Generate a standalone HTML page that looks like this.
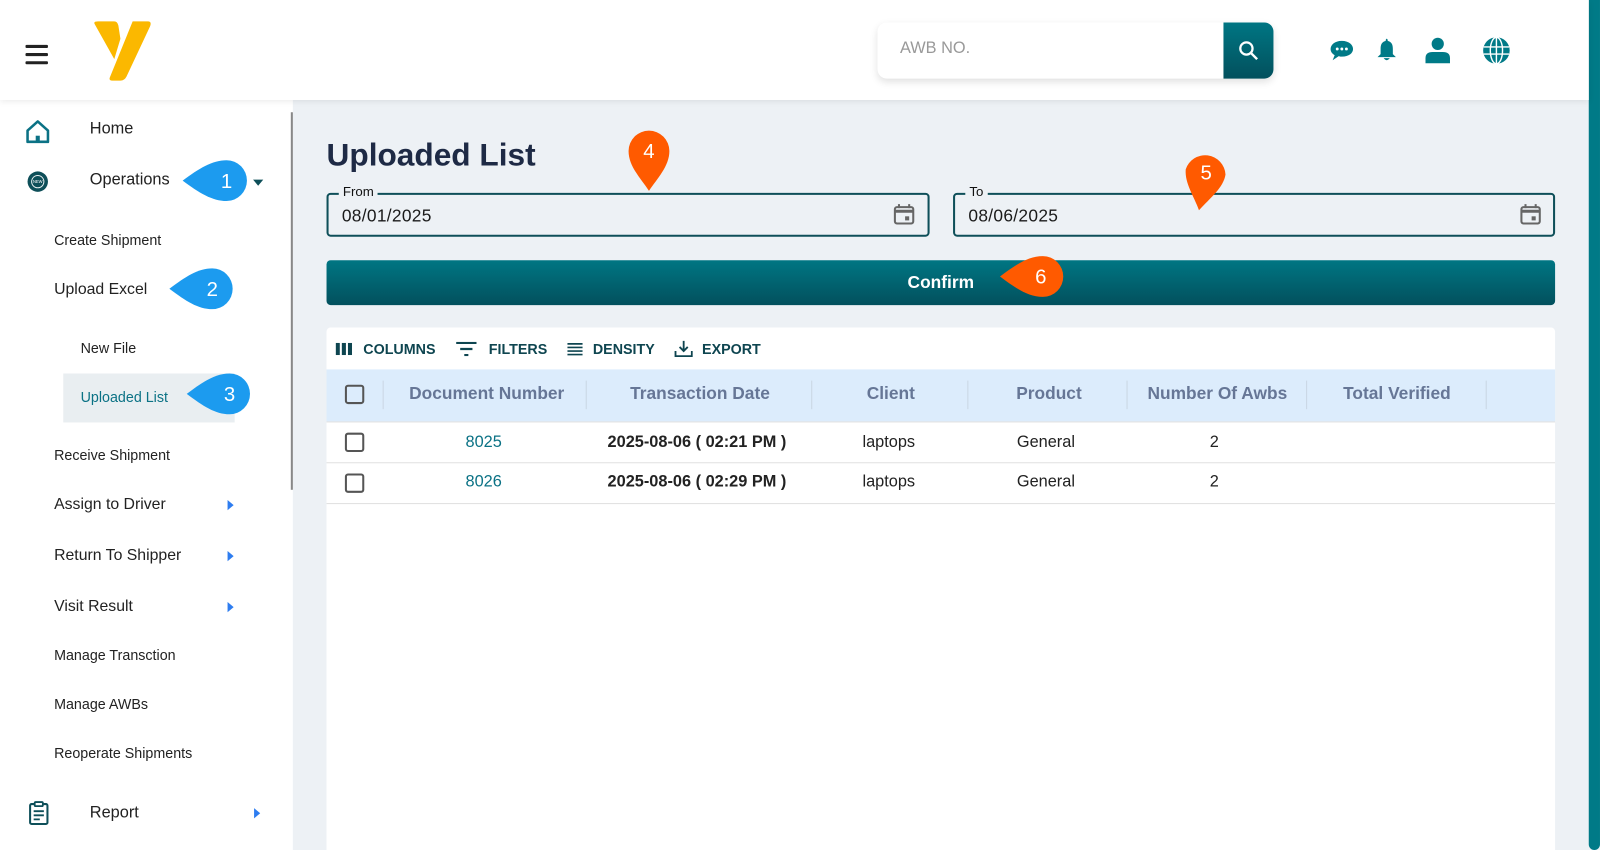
<!DOCTYPE html>
<html><head><meta charset="utf-8"><style>
*{margin:0;padding:0;box-sizing:border-box}
html,body{width:1600px;height:850px;overflow:hidden;background:#fff;font-family:"Liberation Sans",Arial,sans-serif}
#w{position:absolute;left:0;top:0;width:1568px;height:833px;transform:scale(1.0204);transform-origin:0 0;background:#edf1f5;overflow:hidden}
.a{position:absolute}
.hdr{left:0;top:0;width:1557px;height:98px;background:#fff;box-shadow:0 2px 6px rgba(0,0,0,.08);z-index:2}
.side{left:0;top:98px;width:287px;height:740px;background:#fff}
.si{position:absolute;color:#222;white-space:nowrap}
.t{font-size:14px;left:53px}
.m{font-size:15.5px;left:53px}
.tri{position:absolute;width:0;height:0;border-top:5px solid transparent;border-bottom:5px solid transparent;border-left:6px solid #2e7df0}
.fld{position:absolute;top:189px;height:43px;border:2px solid #0e4f59;border-radius:4px}
.fld .lb{position:absolute;top:-11px;left:10px;background:#edf1f5;padding:0 4px;font-size:13px;color:#111}
.fld .v{position:absolute;left:13px;top:11px;font-size:17px;color:#1a1a1a;letter-spacing:.3px}
.btn{background:linear-gradient(#007683,#02505d)}
.th{position:absolute;top:376px;font-size:17px;color:#5a6a8c;font-weight:bold;transform:translateX(-50%);white-space:nowrap;opacity:.9}
.td{position:absolute;font-size:16px;color:#222;transform:translateX(-50%);white-space:nowrap}
.sep{position:absolute;top:373px;width:1px;height:28px;background:#c9d6e3}
.cb{position:absolute;left:338px;width:19px;height:19px;border:2px solid #555;border-radius:3px}
.tb{position:absolute;top:334px;font-size:14px;font-weight:bold;color:#0e4550}
</style></head><body><div id="w">
<!-- header -->
<div class="a hdr">
 <div class="a" style="left:25px;top:44px;width:22px;height:3px;background:#222;border-radius:1px"></div>
 <div class="a" style="left:25px;top:52px;width:22px;height:3px;background:#222;border-radius:1px"></div>
 <div class="a" style="left:25px;top:60px;width:22px;height:3px;background:#222;border-radius:1px"></div>
 <svg class="a" style="left:90px;top:20px" width="60" height="60" viewBox="0 0 60 60"><path d="M3 4 Q1 1 6 1 L22 1 Q25 1 26 5 L28 18 L22 38 Z" fill="#fbb800"/><path d="M40 1 L55 1 Q59 1 57 6 L34 55 Q32 59 28 59 L20 59 Q16 59 18 55 Z" fill="#fbb800"/></svg>
 <div class="a" style="left:860px;top:22px;width:388px;height:55px;background:#fff;border-radius:9px;box-shadow:0 3px 8px rgba(0,0,0,.12)"></div>
 <div class="a" style="left:882px;top:39px;font-size:16px;color:#999">AWB NO.</div>
 <div class="a btn" style="left:1199px;top:22px;width:49px;height:55px;border-radius:0 9px 9px 0"></div>
 <svg class="a" style="left:1212px;top:38px" width="24" height="24" viewBox="0 0 24 24"><circle cx="9.5" cy="9.5" r="6" fill="none" stroke="#fff" stroke-width="2.2"/><path d="M14 14 L20 20" stroke="#fff" stroke-width="2.4"/></svg>
 <svg class="a" style="left:1302px;top:36px" width="26" height="26" viewBox="0 0 26 26"><path d="M13 4 C6 4 2 8 2 12 C2 15 4 17 6 18 L4 23 L10 19 C11 19.5 12 19.5 13 19.5 C20 19.5 24 16 24 12 C24 8 20 4 13 4Z" fill="#007a87"/><circle cx="8.5" cy="12" r="1.4" fill="#fff"/><circle cx="13" cy="12" r="1.4" fill="#fff"/><circle cx="17.5" cy="12" r="1.4" fill="#fff"/></svg>
 <svg class="a" style="left:1347px;top:36px" width="24" height="26" viewBox="0 0 24 26"><path d="M12 2 C12 2 13 2 13 4 C17 5 18 8 18 12 L18 17 L21 20 L3 20 L6 17 L6 12 C6 8 7 5 11 4 C11 2 12 2 12 2Z" fill="#007a87"/><path d="M9 21 Q12 25 15 21Z" fill="#007a87"/></svg>
 <svg class="a" style="left:1395px;top:35px" width="28" height="28" viewBox="0 0 28 28"><circle cx="14" cy="8" r="6" fill="#007a87"/><path d="M2 27 L2 22 Q2 16 9 16 L19 16 Q26 16 26 22 L26 27Z" fill="#007a87"/></svg>
 <svg class="a" style="left:1453px;top:36px" width="27" height="27" viewBox="0 0 27 27"><circle cx="13.5" cy="13.5" r="13" fill="#007a87"/><g stroke="#fff" stroke-width="1.4" fill="none"><path d="M1 10H26M1 17H26M13.5 1V26"/><ellipse cx="13.5" cy="13.5" rx="6" ry="13"/></g></svg>
</div>
<div class="a" style="left:1557px;top:0;width:11px;height:833px;background:#007a87;border-radius:0 0 6px 6px"></div>
<!-- sidebar -->
<div class="a side">
 <div class="a" style="left:285px;top:12px;width:2px;height:370px;background:#888"></div>
</div>
<svg class="a" style="left:25px;top:117px" width="24" height="24" viewBox="0 0 24 24"><path d="M2 11 L12 2 L22 11 L22 22 L2 22 Z" fill="none" stroke="#0b7285" stroke-width="2.5" stroke-linejoin="round"/><rect x="10" y="16" width="4" height="6" fill="#0b7285"/></svg>
<div class="si" style="left:88px;top:118px;font-size:16px">Home</div>
<svg class="a" style="left:26px;top:167px" width="22" height="22" viewBox="0 0 22 22"><circle cx="11" cy="11" r="10" fill="#0e4f59"/><circle cx="11" cy="11" r="6.5" fill="#fff" opacity=".9"/><circle cx="11" cy="11" r="5.5" fill="#0e4f59"/><text x="11" y="12.5" font-size="4" fill="#fff" text-anchor="middle" font-family="Liberation Sans">NEW</text></svg>
<div class="si" style="left:88px;top:168px;font-size:16px">Operations</div>
<div class="a" style="left:248px;top:176px;border-left:5px solid transparent;border-right:5px solid transparent;border-top:6px solid #0e4f59"></div>
<div class="si t" style="top:227px">Create Shipment</div>
<div class="si m" style="top:275px">Upload Excel</div>
<div class="si t" style="left:79px;top:333px">New File</div>
<div class="a" style="left:62px;top:366px;width:168px;height:48px;background:#e9eef1"></div>
<div class="si t" style="left:79px;top:381px;color:#0b7285">Uploaded List</div>
<div class="si t" style="top:438px">Receive Shipment</div>
<div class="si m" style="top:486px">Assign to Driver</div><div class="tri" style="left:223px;top:490px"></div>
<div class="si m" style="top:536px">Return To Shipper</div><div class="tri" style="left:223px;top:540px"></div>
<div class="si m" style="top:586px">Visit Result</div><div class="tri" style="left:223px;top:590px"></div>
<div class="si t" style="top:634px">Manage Transction</div>
<div class="si t" style="top:682px">Manage AWBs</div>
<div class="si t" style="top:730px">Reoperate Shipments</div>
<svg class="a" style="left:28px;top:785px" width="20" height="24" viewBox="0 0 20 24"><rect x="1.5" y="3" width="17" height="19.5" rx="1.5" fill="none" stroke="#0e4f59" stroke-width="2"/><rect x="6" y="1" width="8" height="4" rx="1" fill="#fff" stroke="#0e4f59" stroke-width="1.8"/><path d="M5 10H15M5 14H15M5 18H11" stroke="#0e4f59" stroke-width="1.8"/></svg>
<div class="si" style="left:88px;top:788px;font-size:16px">Report</div><div class="tri" style="left:249px;top:792px"></div>
<!-- main -->
<div class="a" style="left:320px;top:134px;font-size:31px;font-weight:bold;color:#1e2a45">Uploaded List</div>
<div class="fld" style="left:320px;width:591px"><span class="lb">From</span><span class="v">08/01/2025</span></div>
<div class="fld" style="left:934px;width:590px"><span class="lb">To</span><span class="v">08/06/2025</span></div>
<svg class="a" style="left:875px;top:199px" width="22" height="22" viewBox="0 0 22 22"><rect x="2" y="4" width="18" height="16" rx="2" fill="none" stroke="#666" stroke-width="2"/><path d="M2 8H20" stroke="#666" stroke-width="3"/><path d="M6 1V5M16 1V5" stroke="#666" stroke-width="2"/><rect x="12" y="13" width="4" height="4" fill="#666"/></svg>
<svg class="a" style="left:1489px;top:199px" width="22" height="22" viewBox="0 0 22 22"><rect x="2" y="4" width="18" height="16" rx="2" fill="none" stroke="#666" stroke-width="2"/><path d="M2 8H20" stroke="#666" stroke-width="3"/><path d="M6 1V5M16 1V5" stroke="#666" stroke-width="2"/><rect x="12" y="13" width="4" height="4" fill="#666"/></svg>
<div class="a btn" style="left:320px;top:255px;width:1204px;height:44px;border-radius:4px;color:#fff;font-weight:bold;font-size:17px;text-align:center;line-height:44px">Confirm</div>
<!-- card -->
<div class="a" style="left:320px;top:321px;width:1204px;height:530px;background:#fff;border-radius:4px"></div>
<svg class="a" style="left:329px;top:336px" width="16" height="12"><rect x="0" y="0" width="4" height="12" fill="#0e4550"/><rect x="6" y="0" width="4" height="12" fill="#0e4550"/><rect x="12" y="0" width="4" height="12" fill="#0e4550"/></svg>
<div class="tb" style="left:356px">COLUMNS</div>
<svg class="a" style="left:447px;top:335px" width="20" height="14"><path d="M0 1H20M4 7H16M8 13H12" stroke="#0e4550" stroke-width="2.2"/></svg>
<div class="tb" style="left:479px">FILTERS</div>
<svg class="a" style="left:556px;top:336px" width="15" height="13"><path d="M0 1H15M0 4.5H15M0 8H15M0 11.5H15" stroke="#0e4550" stroke-width="1.6"/></svg>
<div class="tb" style="left:581px">DENSITY</div>
<svg class="a" style="left:661px;top:333px" width="18" height="18" viewBox="0 0 18 18"><path d="M9 1V11M5 7L9 11L13 7M1 11V16H17V11" fill="none" stroke="#0e4550" stroke-width="1.8"/></svg>
<div class="tb" style="left:688px">EXPORT</div>
<div class="a" style="left:320px;top:362px;width:1204px;height:51px;background:#dcecfc"></div>
<div class="cb" style="top:377px"></div>
<div class="sep" style="left:375px"></div><div class="sep" style="left:574px"></div><div class="sep" style="left:795px"></div><div class="sep" style="left:948px"></div><div class="sep" style="left:1104px"></div><div class="sep" style="left:1280px"></div><div class="sep" style="left:1456px"></div>
<div class="th" style="left:477px">Document Number</div>
<div class="th" style="left:686px">Transaction Date</div>
<div class="th" style="left:873px">Client</div>
<div class="th" style="left:1028px">Product</div>
<div class="th" style="left:1193px">Number Of Awbs</div>
<div class="th" style="left:1369px">Total Verified</div>
<div class="a" style="left:320px;top:413px;width:1204px;height:1px;background:#e0e0e0"></div>
<div class="a" style="left:320px;top:453px;width:1204px;height:1px;background:#e0e0e0"></div>
<div class="a" style="left:320px;top:493px;width:1204px;height:1px;background:#e0e0e0"></div>
<div class="cb" style="top:424px"></div><div class="cb" style="top:464px"></div>
<div class="td" style="left:474px;top:425px;color:#0b7285">8025</div>
<div class="td" style="left:683px;top:425px;font-weight:bold">2025-08-06 ( 02:21 PM )</div>
<div class="td" style="left:871px;top:425px">laptops</div>
<div class="td" style="left:1025px;top:425px">General</div>
<div class="td" style="left:1190px;top:425px">2</div>
<div class="td" style="left:474px;top:464px;color:#0b7285">8026</div>
<div class="td" style="left:683px;top:464px;font-weight:bold">2025-08-06 ( 02:29 PM )</div>
<div class="td" style="left:871px;top:464px">laptops</div>
<div class="td" style="left:1025px;top:464px">General</div>
<div class="td" style="left:1190px;top:464px">2</div>
<!-- callouts -->
<svg class="a" style="left:0;top:0" width="1568" height="833" font-family="Liberation Sans" font-size="20">
 <g fill="#1c9bef">
  <path d="M179 177 C195 165 208 157 222 157 A20 20 0 0 1 222 197 C208 197 195 189 179 177Z"/>
  <path d="M166 283 C182 271 194 263 208 263 A20 20 0 0 1 208 303 C194 303 182 295 166 283Z"/>
  <path d="M183 386 C199 374 211 366 225 366 A20 20 0 0 1 225 406 C211 406 199 398 183 386Z"/>
 </g>
 <g fill="#ff5a00">
  <path d="M636 187 C628 175 616 163 616 148 A20 20 0 0 1 656 148 C656 163 644 175 636 187Z"/>
  <path d="M1175 206 C1170 192 1161 180 1162 166 A20 20 0 0 1 1201 171 C1199 184 1186 194 1175 206Z"/>
  <path d="M980 271 C996 259 1008 251 1022 251 A20 20 0 0 1 1022 291 C1008 291 996 283 980 271Z"/>
 </g>
 <g fill="#fff" text-anchor="middle">
  <text x="222" y="184">1</text><text x="208" y="290">2</text><text x="225" y="393">3</text>
  <text x="636" y="155">4</text><text x="1182" y="176">5</text><text x="1020" y="278">6</text>
 </g>
</svg>
</div></body></html>
